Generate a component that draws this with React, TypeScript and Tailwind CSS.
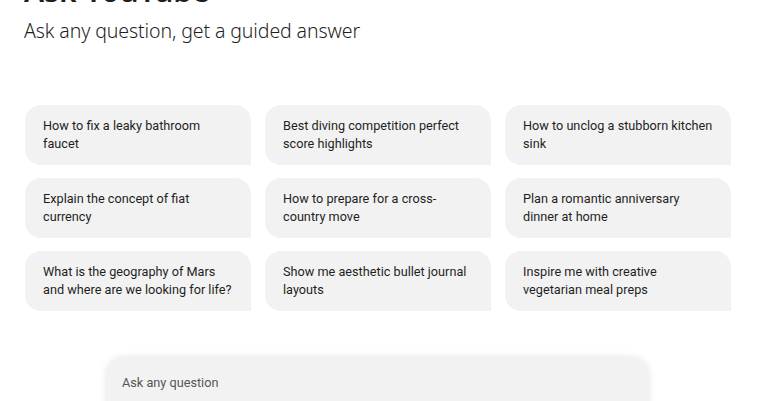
import React from "react";

const items = [
  "How to fix a leaky bathroom faucet",
  "Best diving competition perfect score highlights",
  "How to unclog a stubborn kitchen sink",
  "Explain the concept of fiat currency",
  "How to prepare for a cross-country move",
  "Plan a romantic anniversary dinner at home",
  "What is the geography of Mars and where are we looking for life?",
  "Show me aesthetic bullet journal layouts",
  "Inspire me with creative vegetarian meal preps",
];

export default function App() {
  return (
    <div className="w-[768px] h-[401px] overflow-hidden bg-white relative">
      <div className="pl-[24px] pt-0">
        <h1
          className="text-[30px] leading-[36px] font-semibold text-[#1f1f1f] mt-[-27px]"
          style={{ fontFamily: '"Noto Sans", sans-serif' }}
        >
          Ask YouTube
        </h1>
        <p
          className="text-[19.5px] leading-[28px] font-light text-[#1f1f1f] mt-[8px] tracking-[-0.1px]"
          style={{ fontFamily: '"Noto Sans", sans-serif' }}
        >
          Ask any question, get a guided answer
        </p>
      </div>
      <div
        className="ml-[25px] mt-[60px] w-[706px] grid grid-cols-3 gap-x-[14px] gap-y-[13px]"
        style={{ fontFamily: 'Roboto, "Liberation Sans", sans-serif' }}
      >
        {items.map((t) => (
          <div
            key={t}
            className="h-[60px] bg-[#f2f2f2] rounded-tl-[16px] rounded-tr-[16px] rounded-bl-[16px] flex items-center pl-[18px] pr-[16px] text-[12.7px] leading-[18px] text-[#1f1f1f]"
          >
            {t}
          </div>
        ))}
      </div>
      <div className="mt-[47px] ml-[107px] w-[541px] h-[60px] bg-[#f2f2f2] rounded-t-[16px] shadow-[0_0_8px_rgba(0,0,0,0.12)] pl-[15px] pt-[11px]">
        <span
          className="text-[12.7px] leading-[16px] text-[#555]"
          style={{ fontFamily: 'Roboto, "Liberation Sans", sans-serif' }}
        >
          Ask any question
        </span>
      </div>
    </div>
  );
}
